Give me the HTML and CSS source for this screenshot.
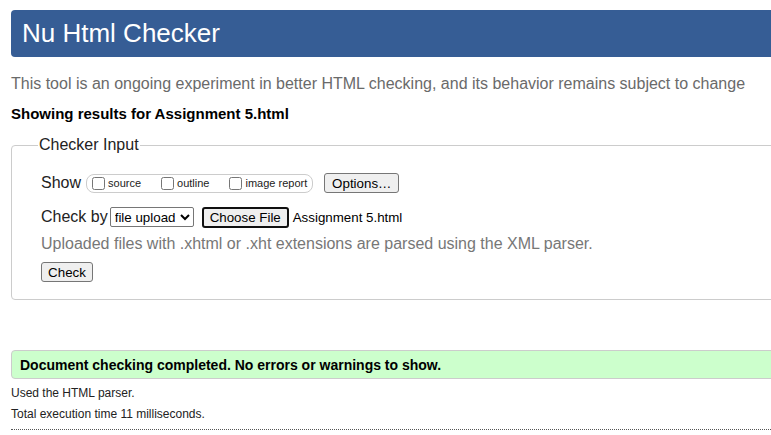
FILE: index.html
```html
<!DOCTYPE html>
<html lang="en">
<head>
<meta charset="utf-8">
<title>Nu Html Checker</title>
<link rel="stylesheet" href="styles.css">
</head>
<body>
<div class="page">
  <h1 class="title">Nu Html Checker</h1>
  <p class="about">This tool is an ongoing experiment in better HTML checking, and its behavior remains subject to change</p>
  <p class="showing">Showing results for Assignment 5.html</p>
  <form class="checker">
    <fieldset class="input-set">
      <legend class="legend">Checker Input</legend>
      <div class="row">
        <span class="row-label">Show</span>
        <span class="options-group">
          <label class="opt"><input type="checkbox" class="cb"><span class="opt-text">source</span></label>
          <label class="opt"><input type="checkbox" class="cb"><span class="opt-text">outline</span></label>
          <label class="opt last"><input type="checkbox" class="cb"><span class="opt-text">image report</span></label>
        </span>
        <button type="button" class="btn options-btn">Options…</button>
      </div>
      <div class="row row-checkby">
        <span class="row-label">Check by</span>
        <select class="select"><option>file upload</option></select>
        <button type="button" class="btn file-btn">Choose File</button>
        <span class="filename">Assignment 5.html</span>
      </div>
      <p class="hint">Uploaded files with .xhtml or .xht extensions are parsed using the XML parser.</p>
      <div class="row row-submit">
        <button type="button" class="btn check-btn">Check</button>
      </div>
    </fieldset>
  </form>
  <div class="success">
    <p class="success-text">Document checking completed. No errors or warnings to show.</p>
  </div>
  <p class="stats">Used the HTML parser.</p>
  <p class="stats">Total execution time 11 milliseconds.</p>
  <hr class="divider">
</div>
</body>
</html>
```
FILE: styles.css
```css
html {
  overflow: hidden;
}
body {
  margin: 0;
  background: #fff;
  font-family: "Liberation Sans", Arial, sans-serif;
  color: #000;
}
.page {
  width: 820px;
  padding: 10px 0 0 11px;
}
.title {
  margin: 0;
  height: 47px;
  line-height: 47px;
  padding-left: 11px;
  background: #365d95;
  color: #fff;
  font-size: 26px;
  font-weight: normal;
  border-radius: 4px;
}
.about {
  margin: 17px 0 0;
  font-size: 16px;
  line-height: 20px;
  color: #6a6a6a;
}
.showing {
  margin: 10px 0 0;
  font-size: 15px;
  font-weight: bold;
  line-height: 20px;
}
.checker {
  margin: 0;
}
.input-set {
  margin: 12px 0 0;
  padding: 18px 0 16px 29px;
  border: 1px solid #ccc;
  border-radius: 4px;
}
.legend {
  padding: 0 1px;
  margin-left: -3px;
  font-size: 16px;
  line-height: 18px;
  color: #222;
}
.row {
  display: flex;
  align-items: center;
  height: 22px;
}
.row-label {
  font-size: 16px;
  color: #222;
}
.options-group {
  display: inline-flex;
  align-items: center;
  height: 17px;
  margin-left: 5px;
  padding: 0 5px 0 1px;
  border: 1px solid #ccc;
  border-radius: 8px;
}
.opt {
  display: inline-flex;
  align-items: center;
  margin-right: 16px;
}
.opt.last {
  margin-right: 0;
}
.cb {
  width: 13px;
  height: 13px;
  margin: 0 3px 0 4px;
}
.opt-text {
  font-size: 11px;
  color: #222;
}
.btn {
  font-family: "Liberation Sans", Arial, sans-serif;
  font-size: 13.33px;
  height: 20px;
  padding: 0 6px;
  background: #efefef;
  color: #000;
  border: 1px solid #767676;
  border-radius: 3px;
  white-space: nowrap;
}
.options-btn {
  margin-left: 11px;
  width: 75px;
}
.row-checkby {
  margin-top: 12px;
}
.select {
  margin-left: 2px;
  width: 84px;
  height: 20px;
  font-family: "Liberation Sans", Arial, sans-serif;
  font-size: 13.33px;
  border: 1px solid #767676;
  border-radius: 2px;
  background: #fff;
  color: #000;
}
.file-btn {
  margin-left: 8px;
  width: 87px;
  height: 21px;
  padding: 0 4px;
  border: 2px solid #101010;
  border-radius: 3px;
}
.filename {
  margin-left: 4px;
  font-size: 13.33px;
}
.hint {
  margin: 6px 0 0;
  font-size: 16px;
  line-height: 20px;
  color: #777;
}
.row-submit {
  margin-top: 7px;
}
.check-btn {
  width: 52px;
}
.success {
  margin-top: 50px;
  height: 27px;
  display: flex;
  align-items: center;
  padding-left: 8px;
  background: #ccffcc;
  border: 1px solid #ccc;
  border-radius: 4px;
}
.success-text {
  margin: 0;
  font-size: 14px;
  font-weight: bold;
}
.stats {
  margin: 7px 0 0;
  font-size: 12px;
  line-height: 14px;
  color: #222;
}
.divider {
  margin: 8px 0 0;
  border: 0;
  border-top: 1px dotted #555;
}
```
